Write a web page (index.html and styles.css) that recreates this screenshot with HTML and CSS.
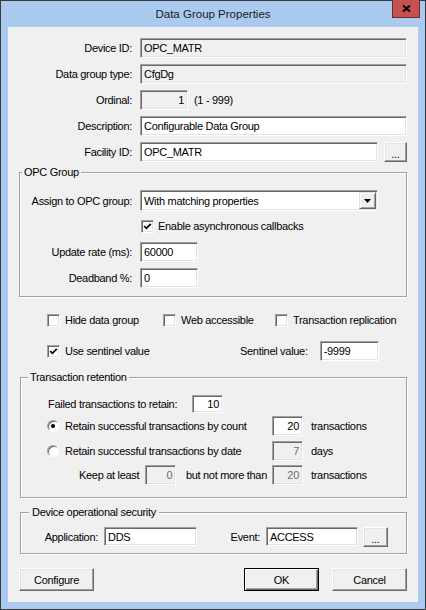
FILE: index.html
```html
<!doctype html>
<html lang="en">
<head>
	<meta charset="utf-8">
	<title>Data Group Properties</title>
	<link rel="stylesheet" href="styles.css">
</head>
<body>
	<div class="window">
		<div class="titlebar">
			<span class="title">Data Group Properties</span>
			<span class="close"><svg width="9" height="7" viewBox="0 0 9 7"><path d="M1 0.5 L8 6.5 M8 0.5 L1 6.5" stroke="#000" stroke-width="2"/></svg></span>
		</div>
		<div class="client">
			<div class="rows">
				<div class="row">
					<span class="lbl">Device ID:</span>
					<div class="box ro wide">OPC_MATR</div>
				</div>
				<div class="row">
					<span class="lbl">Data group type:</span>
					<div class="box ro wide">CfgDg</div>
				</div>
				<div class="row">
					<span class="lbl">Ordinal:</span>
					<div class="box ro num ordinal">1</div>
					<span class="hint">(1 - 999)</span>
				</div>
				<div class="row">
					<span class="lbl">Description:</span>
					<div class="box wide">Configurable Data Group</div>
				</div>
				<div class="row">
					<span class="lbl">Facility ID:</span>
					<div class="box facility">OPC_MATR</div>
					<div class="btn dots">...</div>
				</div>
			</div>

			<fieldset class="group opc">
				<legend>OPC Group</legend>
				<div class="row combo-row">
					<span class="lbl in">Assign to OPC group:</span>
					<div class="combo">
						<span class="combo-text">With matching properties</span>
						<span class="drop"><svg width="7" height="4" viewBox="0 0 7 4"><path d="M0 0 H7 L3.5 4 Z" fill="#000"/></svg></span>
					</div>
				</div>
				<div class="row check-row">
					<span class="cb on"><svg width="9" height="9" viewBox="0 0 9 9"><path d="M1.2 4 L3.4 6.3 L7.8 1.8" fill="none" stroke="#000" stroke-width="1.8"/></svg></span>
					<span class="cb-text">Enable asynchronous callbacks</span>
				</div>
				<div class="row">
					<span class="lbl in">Update rate (ms):</span>
					<div class="box short">60000</div>
				</div>
				<div class="row">
					<span class="lbl in">Deadband %:</span>
					<div class="box short">0</div>
				</div>
			</fieldset>

			<div class="opts">
				<div class="opt-row first">
					<label class="chk"><span class="cb"></span><span class="cb-text">Hide data group</span></label>
					<label class="chk"><span class="cb"></span><span class="cb-text">Web accessible</span></label>
					<label class="chk"><span class="cb"></span><span class="cb-text">Transaction replication</span></label>
				</div>
				<div class="opt-row second">
					<label class="chk"><span class="cb on"><svg width="9" height="9" viewBox="0 0 9 9"><path d="M1.2 4 L3.4 6.3 L7.8 1.8" fill="none" stroke="#000" stroke-width="1.8"/></svg></span><span class="cb-text">Use sentinel value</span></label>
					<span class="sentinel-lbl">Sentinel value:</span>
					<div class="box sentinel">-9999</div>
				</div>
			</div>

			<fieldset class="group retention">
				<legend>Transaction retention</legend>
				<div class="ret-row failed">
					<span class="failed-lbl">Failed transactions to retain:</span>
					<div class="box num small">10</div>
				</div>
				<div class="ret-row radio1">
					<label class="radio"><span class="rb on"></span><span>Retain successful transactions by count</span></label>
					<div class="box num small">20</div>
					<span class="unit">transactions</span>
				</div>
				<div class="ret-row radio2">
					<label class="radio"><span class="rb"></span><span>Retain successful transactions by date</span></label>
					<div class="box num small off">7</div>
					<span class="unit">days</span>
				</div>
				<div class="ret-row keep">
					<div class="keep-part">
						<span>Keep at least</span>
						<div class="box num small off keep-min">0</div>
						<span class="keep-max">but not more than</span>
					</div>
					<div class="box num small off">20</div>
					<span class="unit">transactions</span>
				</div>
			</fieldset>

			<fieldset class="group security">
				<legend>Device operational security</legend>
				<div class="sec-row">
					<span class="app-lbl">Application:</span>
					<div class="box app">DDS</div>
					<span class="event-lbl">Event:</span>
					<div class="box event">ACCESS</div>
					<div class="btn dots sec-dots">...</div>
				</div>
			</fieldset>

			<div class="buttons">
				<div class="btn push">Configure</div>
				<div class="btn push default">OK</div>
				<div class="btn push cancel">Cancel</div>
			</div>
		</div>
	</div>
</body>
</html>
```

FILE: styles.css
```css
body{
	margin: 0;
	font-family: "Liberation Sans", Arial, sans-serif;
	font-size: 11px;
	letter-spacing: -0.3px;
	color: #000;
}
.window{
	width: 426px;
	height: 610px;
	box-sizing: border-box;
	border: 1px solid #3a3a3a;
	background: #aacbef;
	display: flex;
	flex-direction: column;
}
.titlebar{
	height: 26px;
	flex: none;
	display: grid;
	grid-template-columns: 1fr auto 1fr;
}
.title{
	grid-column: 2;
	align-self: center;
	font-size: 11.5px;
	letter-spacing: 0;
	color: #1a1a1a;
}
.close{
	grid-column: 3;
	justify-self: end;
	align-self: start;
	width: 28px;
	height: 18px;
	margin: -1px 5px 0 0;
	box-sizing: border-box;
	background: #c75050;
	border: 1px solid #6b2b2b;
	border-top: none;
	display: flex;
	align-items: center;
	justify-content: center;
}
.client{
	flex: 1;
	margin: 0 7px 7px;
	padding: 11px 11px 0;
	box-sizing: border-box;
	background: #f0f0f0;
}

/* edit boxes */
.box{
	height: 20px;
	box-sizing: border-box;
	border: 1px solid;
	border-color: #a0a0a0 #fff #fff #a0a0a0;
	box-shadow: inset 1px 1px #696969, inset -1px -1px #e3e3e3;
	background: #fff;
	padding: 0 3px;
	display: flex;
	align-items: center;
	white-space: nowrap;
	flex: none;
}
.box.ro,
.box.off{
	background: #f0f0f0;
}
.box.off{
	color: #6d6d6d;
}
.box.num{
	justify-content: flex-end;
}
.wide{
	width: 267px;
}
.ordinal{
	width: 48px;
}
.facility{
	width: 238px;
}
.short{
	width: 58px;
}
.small{
	width: 31px;
}

/* raised buttons */
.btn{
	box-sizing: border-box;
	border: 1px solid;
	border-color: #fff #696969 #696969 #fff;
	box-shadow: inset -1px -1px #a0a0a0, inset 1px 1px #e3e3e3;
	background: #f0f0f0;
	display: flex;
	align-items: center;
	justify-content: center;
	flex: none;
}
.dots{
	width: 23px;
	height: 20px;
	margin-left: 6px;
	align-items: flex-end;
	padding-bottom: 3px;
	line-height: 8px;
}

.rows{
	display: flex;
	flex-direction: column;
	gap: 6px;
}
.row{
	display: flex;
	align-items: center;
	height: 20px;
}
.lbl{
	width: 113px;
	margin-right: 8px;
	text-align: right;
	flex: none;
	white-space: nowrap;
}
.lbl.in{
	width: 112px;
}
.hint{
	margin-left: 6px;
}

/* group boxes */
.group{
	margin: 0;
	padding: 0;
	border: 1px solid #a0a0a0;
	box-shadow: inset 1px 1px #fff, 1px 1px #fff;
	min-width: 0;
}
.group legend{
	line-height: 13px;
	padding: 0 2px;
	background: #f0f0f0;
	white-space: nowrap;
}
.opc{
	margin-top: 4px;
	padding: 11px 0 8px;
}
.opc legend{
	margin-left: 2px;
}
.opc .row{
	margin-top: 6px;
}
.opc .combo-row{
	margin-top: 0;
	height: 21px;
}
.opc .check-row{
	margin-top: 5px;
	padding-left: 121px;
}
.combo{
	width: 238px;
	height: 21px;
	box-sizing: border-box;
	border: 1px solid;
	border-color: #a0a0a0 #fff #fff #a0a0a0;
	box-shadow: inset 1px 1px #696969, inset -1px -1px #e3e3e3;
	background: #fff;
	padding: 1px;
	display: flex;
	align-items: center;
}
.combo-text{
	flex: 1;
	padding-left: 2px;
}
.drop{
	width: 17px;
	height: 17px;
	box-sizing: border-box;
	border: 1px solid;
	border-color: #e3e3e3 #696969 #696969 #e3e3e3;
	box-shadow: inset 1px 1px #fff, inset -1px -1px #a0a0a0;
	background: #f0f0f0;
	display: flex;
	align-items: center;
	justify-content: center;
}

/* check boxes and radios */
.cb{
	width: 13px;
	height: 13px;
	box-sizing: border-box;
	border: 1px solid;
	border-color: #a0a0a0 #fff #fff #a0a0a0;
	box-shadow: inset 1px 1px #696969, inset -1px -1px #e3e3e3;
	background: #fff;
	flex: none;
	display: flex;
	align-items: center;
	justify-content: center;
}
.cb-text{
	margin-left: 5px;
	white-space: nowrap;
}
.check-row .cb-text{
	margin-left: 4px;
}
.chk,
.radio{
	display: flex;
	align-items: center;
}
.rb{
	width: 12px;
	height: 12px;
	box-sizing: border-box;
	border-radius: 50%;
	border: 1px solid;
	border-color: #a0a0a0 #fff #fff #a0a0a0;
	box-shadow: inset 1px 1px #696969;
	background: #fff;
	margin-right: 6px;
	flex: none;
	display: flex;
	align-items: center;
	justify-content: center;
}
.rb.on::after{
	content: "";
	width: 4px;
	height: 4px;
	border-radius: 50%;
	background: #000;
}

.opts{
	padding-left: 28px;
	margin-top: 13px;
}
.opt-row{
	display: grid;
	justify-content: start;
	align-items: center;
	height: 20px;
}
.opt-row.first{
	grid-template-columns: 116px 112px auto;
}
.opt-row.second{
	margin-top: 11px;
	grid-template-columns: 193px auto 59px;
}
.sentinel-lbl{
	margin-right: 12px;
}
.sentinel{
	width: 59px;
}

.retention{
	margin: 10px 0 0 1px;
	padding: 11px 0 12px;
}
.retention legend{
	margin-left: 7px;
}
.ret-row{
	display: flex;
	align-items: center;
	height: 20px;
	padding-left: 26px;
}
.ret-row.failed{
	height: 18px;
}
.failed .box{
	height: 18px;
}
.failed-lbl{
	width: 144px;
	margin-left: 1px;
}
.radio1{
	margin-top: 3px;
}
.radio2{
	margin-top: 5px;
}
.keep{
	margin-top: 4px;
}
.radio,
.keep-part{
	width: 225px;
	flex: none;
}
.keep-part{
	display: flex;
	align-items: center;
	padding-left: 32px;
	box-sizing: border-box;
}
.keep-min{
	margin-left: 6px;
}
.keep-max{
	margin-left: auto;
	margin-right: 5px;
}
.unit{
	margin-left: 8px;
}

.security{
	margin: 8px 0 0 1px;
	padding: 8px 0 7px;
}
.security legend{
	margin-left: 8px;
	padding: 0 3px;
}
.sec-row{
	display: flex;
	align-items: center;
	height: 19px;
	padding-left: 22px;
}
.sec-row .box{
	height: 19px;
}
.app-lbl{
	width: 55px;
	margin-right: 6px;
	text-align: right;
}
.app{
	width: 93px;
}
.event-lbl{
	width: 63px;
	margin-right: 6px;
	text-align: right;
}
.event{
	width: 92px;
}
.sec-dots{
	width: 25px;
	margin-left: 5px;
}

.buttons{
	display: flex;
	margin-top: 14px;
}
.push{
	width: 75px;
	height: 23px;
}
.default{
	margin-left: auto;
	border-color: #000;
	box-shadow: inset 1px 1px #fff, inset -1px -1px #696969, inset -2px -2px #a0a0a0;
}
.cancel{
	margin-left: 13px;
}
```
